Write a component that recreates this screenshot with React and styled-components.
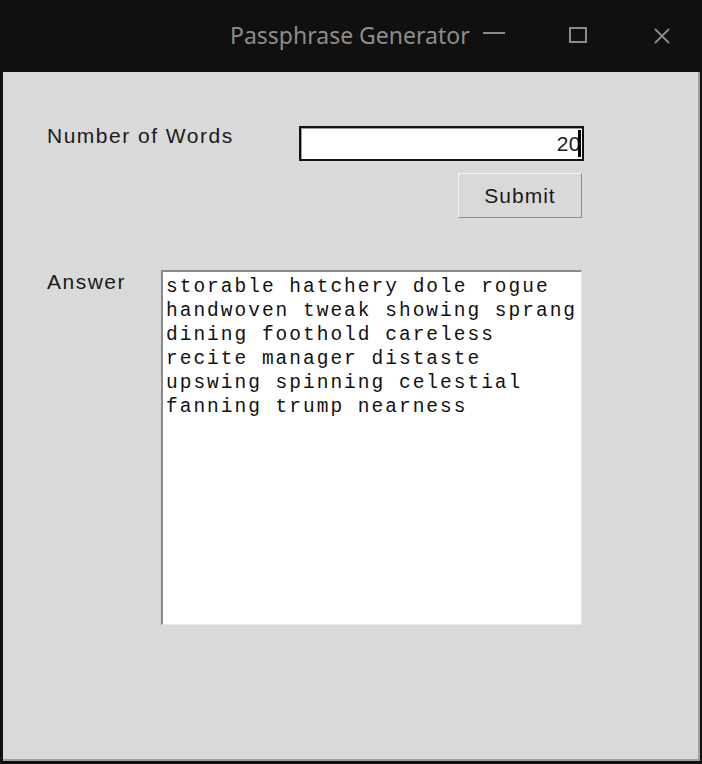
import React from "react";
import styled, { createGlobalStyle } from "styled-components";

const Global = createGlobalStyle`
  html, body { margin: 0; padding: 0; background: #101010; }
  body { width: 702px; height: 764px; overflow: hidden; }
`;

const Frame = styled.div`
  width: 702px;
  height: 764px;
  display: flex;
  flex-direction: column;
  background: #101010;
  box-sizing: border-box;
`;

const TitleBar = styled.div`
  height: 71px;
  flex: none;
  display: flex;
  align-items: center;
  position: relative;
  font-family: "Noto Sans", "Open Sans", sans-serif;
  color: #8c8c8c;
`;

const Title = styled.div`
  margin-left: 230px;
  font-size: 23px;
  margin-top: -2px;
`;

const WinButton = styled.div`
  position: absolute;
  top: 0;
  height: 71px;
  display: flex;
  align-items: center;
  left: ${(p) => p.x}px;
`;

const Client = styled.div`
  flex: 1;
  margin: 1px 2px 3px 3px;
  background: #d9d9d9;
  border-right: 2px solid #a0a0a0;
  border-bottom: 2px solid #a0a0a0;
  position: relative;
  box-sizing: border-box;
`;

const Content = styled.div`
  padding: 52px 0 0 44px;
  display: grid;
  grid-template-columns: 114px 422px;
  font-family: "Liberation Sans", Arial, sans-serif;
  font-size: 21px;
  color: #1a1a1a;
`;

const Label = styled.div`
  padding-top: ${(p) => p.pt || 0}px;
  letter-spacing: 1.5px;
  white-space: nowrap;
`;

const RightCol = styled.div`
  display: flex;
  flex-direction: column;
  align-items: flex-end;
`;

const Entry = styled.div`
  width: 285px;
  height: 35px;
  box-sizing: border-box;
  border: 2px solid #111;
  box-shadow: inset 1px 1px 0 #9a9a9a;
  background: #fff;
  display: flex;
  align-items: center;
  justify-content: flex-end;
  padding-right: 1px;
  margin-right: -1px;
  margin-top: 2px;
  letter-spacing: 0.5px;
`;

const Caret = styled.span`
  display: inline-block;
  width: 3px;
  height: 27px;
  background: #000;
  margin-left: -3px;
`;

const Button = styled.div`
  margin-top: 12px;
  width: 124px;
  height: 45px;
  box-sizing: border-box;
  border: 1px solid;
  border-color: #f4f4f4 #8f8f8f #8f8f8f #f4f4f4;
  background: #d9d9d9;
  display: flex;
  align-items: center;
  justify-content: center;
  letter-spacing: 1px;
  margin-right: 1px;
`;

const AnswerRow = styled.div`
  grid-column: 1 / 3;
  display: grid;
  grid-template-columns: 114px 422px;
  margin-top: 52px;
`;

const TextBox = styled.div`
  width: 421px;
  height: 355px;
  box-sizing: border-box;
  background: #fff;
  border-left: 2px solid #8a8a8a;
  border-top: 2px solid #8a8a8a;
  border-right: 1px solid #eaeaea;
  border-bottom: 1px solid #eaeaea;
  padding: 3px 0 0 3px;
  font-family: "Liberation Mono", "Courier New", monospace;
  font-size: 19.5px;
  letter-spacing: 2px;
  line-height: 24px;
  color: #111;
  white-space: pre;
  overflow: hidden;
`;

const lines = [
  "storable hatchery dole rogue",
  "handwoven tweak showing sprang",
  "dining foothold careless",
  "recite manager distaste",
  "upswing spinning celestial",
  "fanning trump nearness",
];

export default function App() {
  return (
    <>
      <Global />
      <Frame>
        <TitleBar>
          <Title>Passphrase Generator</Title>
          <WinButton x={483}>
            <svg width="22" height="20" viewBox="0 0 22 20">
              <line x1="0" y1="7" x2="22" y2="7" stroke="#8c8c8c" strokeWidth="2" />
            </svg>
          </WinButton>
          <WinButton x={569}>
            <svg width="18" height="18" viewBox="0 0 18 18">
              <rect x="1" y="1" width="16" height="14" fill="none" stroke="#8c8c8c" strokeWidth="2" />
            </svg>
          </WinButton>
          <WinButton x={654}>
            <svg width="16" height="16" viewBox="0 0 16 16">
              <path d="M1 1 L15 15 M15 1 L1 15" stroke="#8c8c8c" strokeWidth="1.8" fill="none" />
            </svg>
          </WinButton>
        </TitleBar>
        <Client>
          <Content>
            <Label pt={0}>Number of Words</Label>
            <RightCol>
              <Entry>
                20<Caret />
              </Entry>
              <Button>Submit</Button>
            </RightCol>
            <AnswerRow>
              <Label pt={0}>Answer</Label>
              <TextBox>{lines.join("\n")}</TextBox>
            </AnswerRow>
          </Content>
        </Client>
      </Frame>
    </>
  );
}
